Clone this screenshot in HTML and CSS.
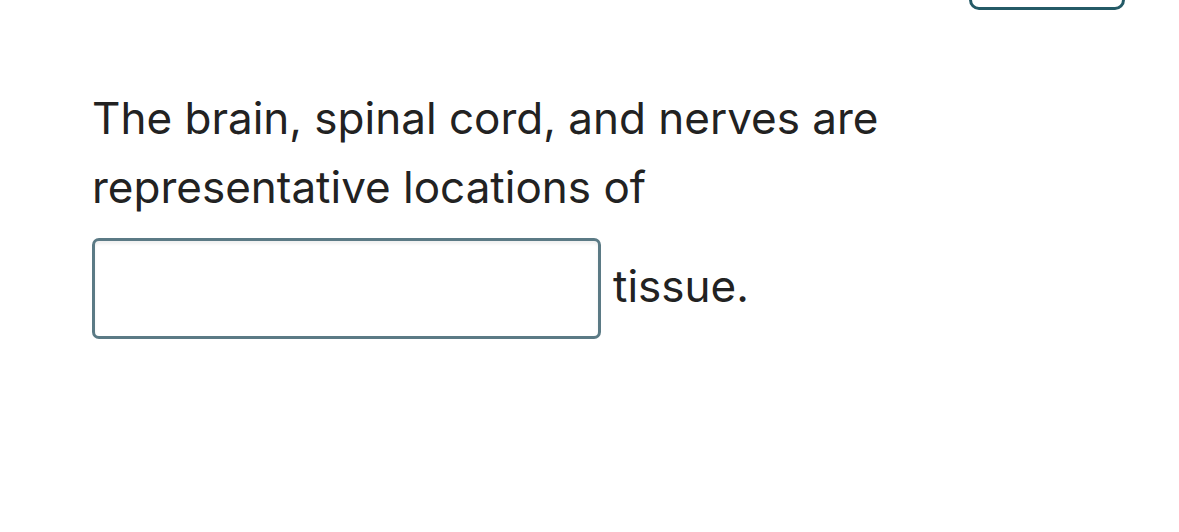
FILE: index.html
```html
<!DOCTYPE html>
<html lang="en">
<head>
<meta charset="utf-8">
<link rel="stylesheet" href="styles.css">
</head>
<body>
<div class="page">
  <div class="topbar">
    <button class="top-btn" type="button"></button>
  </div>
  <div class="question">
    <p class="prompt">The brain, spinal cord, and nerves are representative locations of</p>
    <div class="answer-row">
      <input class="blank" type="text" aria-label="answer">
      <span class="suffix">tissue.</span>
    </div>
  </div>
</div>
</body>
</html>
```
FILE: styles.css
```css
html, body {
  margin: 0;
  padding: 0;
  background: #fff;
}
.page {
  width: 1179px;
  height: 532px;
  overflow: hidden;
  font-family: Inter, "Open Sans", sans-serif;
  font-variant-ligatures: none;
  color: #222;
}
.topbar {
  display: flex;
  justify-content: flex-end;
  padding-right: 54px;
}
.top-btn {
  width: 156px;
  height: 40px;
  margin-top: -30px;
  border: 3px solid #245a66;
  border-radius: 10px;
  background: #fff;
}
.question {
  padding: 74px 0 0 92px;
  width: 820px;
}
.prompt {
  margin: 0;
  font-size: 44px;
  line-height: 69px;
}
.answer-row {
  display: flex;
  align-items: center;
  gap: 12px;
  margin-top: 16px;
}
.blank {
  width: 509px;
  height: 101px;
  box-sizing: border-box;
  border: 3px solid #5b7a85;
  border-radius: 7px;
  box-shadow: inset 0 3px 3px rgba(0,0,0,0.06);
  margin: 0;
  padding: 0 12px;
  font: inherit;
}
.suffix {
  font-size: 44px;
  padding-bottom: 6px;
}
```
